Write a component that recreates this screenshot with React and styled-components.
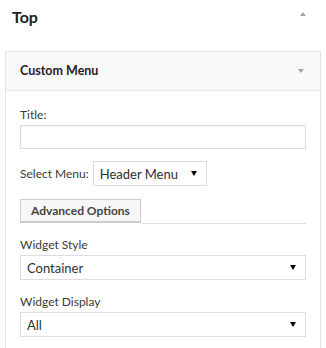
import React from 'react';
import styled, { createGlobalStyle } from 'styled-components';

const GlobalStyle = createGlobalStyle`
	body {
		margin: 0;
		background: #fff;
		font-family: Lato, "Open Sans", "Liberation Sans", sans-serif;
		color: #444;
	}
`;

const Sidebar = styled.div`
	width: 326px;
`;

const SidebarHead = styled.div`
	display: flex;
	justify-content: space-between;
	align-items: flex-start;
	padding: 6px 20px 0 12px;
`;

const SidebarTitle = styled.h2`
	margin: 0;
	font-size: 16px;
	font-weight: 700;
	line-height: 22px;
	color: #1e2226;
`;

const Arrow = styled.span`
	display: block;
	width: 0;
	height: 0;
	border-left: ${p => p.size || 3}px solid transparent;
	border-right: ${p => p.size || 3}px solid transparent;
	${p => (p.up ? 'border-bottom' : 'border-top')}: ${p => p.h || 4}px solid ${p => p.color || '#a0a5aa'};
`;

const UpArrow = styled(Arrow)`
	margin-top: 6px;
`;

const Widget = styled.div`
	margin: 23px 5px 0;
	border: 1px solid #e5e5e5;
	background: #fff;
`;

const WidgetTop = styled.div`
	display: flex;
	justify-content: space-between;
	align-items: center;
	height: 38px;
	padding: 0 16px 0 14px;
	background: #f9f9f9;
	border-bottom: 1px solid #e5e5e5;
`;

const WidgetName = styled.h3`
	margin: 0;
	font-size: 12.5px;
	font-weight: 700;
	line-height: 18px;
	color: #1e2226;
`;

const WidgetInside = styled.div`
	padding: 15px 14px 20px;
`;

const Label = styled.label`
	display: block;
	font-size: 12px;
	line-height: 18px;
	color: #3a3a3a;
	margin-top: ${p => p.top || 0}px;
`;

const TextInput = styled.input`
	display: block;
	box-sizing: border-box;
	width: 100%;
	height: 24px;
	margin: 1px 0 0;
	border: 1px solid #ddd;
	box-shadow: inset 0 1px 2px rgba(0, 0, 0, 0.04);
	background: #fff;
	outline: none;
`;

const InlineRow = styled.div`
	display: flex;
	align-items: center;
	gap: 4px;
	margin-top: 12px;
`;

const SelectBox = styled.div`
	box-sizing: border-box;
	display: flex;
	align-items: center;
	justify-content: space-between;
	width: ${p => (p.inline ? '114px' : '100%')};
	height: 25px;
	margin-top: ${p => p.top || 0}px;
	padding: 0 9px 0 6px;
	border: 1px solid #ddd;
	background: #fff;
	font-size: 13px;
	color: #2c3035;
`;

const ButtonRow = styled.div`
	display: flex;
	align-items: flex-end;
	margin-top: 13px;
`;

const Button = styled.button`
	height: 23px;
	padding: 0 10px;
	border: 1px solid #ccc;
	border-radius: 0;
	background: #f7f7f7;
	box-shadow: 0 1px 0 #ccc;
	font-family: inherit;
	font-size: 12px;
	font-weight: 700;
	color: #444;
	line-height: 21px;
`;

const Rule = styled.div`
	flex: 1;
	border-bottom: 1px solid #ddd;
	margin-bottom: -2px;
`;

function Select({ value, inline, top }) {
	return (
		<SelectBox inline={inline} top={top}>
			<span>{value}</span>
			<Arrow size={3} h={5} color="#000" />
		</SelectBox>
	);
}

export default function App() {
	return (
		<Sidebar>
			<GlobalStyle />
			<SidebarHead>
				<SidebarTitle>Top</SidebarTitle>
				<UpArrow up size={3} h={4} />
			</SidebarHead>
			<Widget>
				<WidgetTop>
					<WidgetName>Custom Menu</WidgetName>
					<Arrow size={3} h={4} />
				</WidgetTop>
				<WidgetInside>
					<Label>Title:</Label>
					<TextInput type="text" />
					<InlineRow>
						<Label>Select Menu:</Label>
						<Select inline value="Header Menu" />
					</InlineRow>
					<ButtonRow>
						<Button>Advanced Options</Button>
						<Rule />
					</ButtonRow>
					<Label top={14}>Widget Style</Label>
					<Select value="Container" top={1} />
					<Label top={13}>Widget Display</Label>
					<Select value="All" top={1} />
				</WidgetInside>
			</Widget>
		</Sidebar>
	);
}
